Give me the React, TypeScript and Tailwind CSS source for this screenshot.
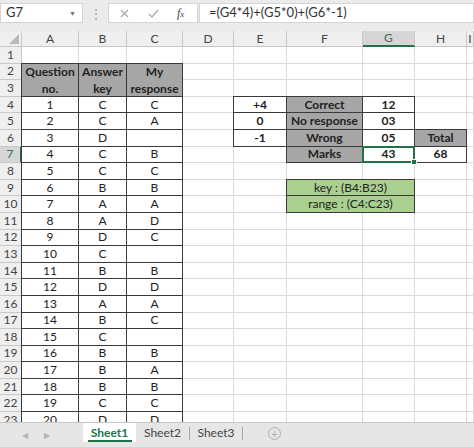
import React from "react";

type Variant = "plain" | "box" | "gray" | "green";

type CellDef = {
  text?: string;
  variant?: Variant;
  bold?: boolean;
  span?: string;
  selected?: boolean;
};

const COLS = ["A", "B", "C", "D", "E", "F", "G", "H", "I"];

const answers: [string, string, string][] = [
  ["1", "C", "C"],
  ["2", "C", "A"],
  ["3", "D", ""],
  ["4", "C", "B"],
  ["5", "C", "C"],
  ["6", "B", "B"],
  ["7", "A", "A"],
  ["8", "A", "D"],
  ["9", "D", "C"],
  ["10", "C", ""],
  ["11", "B", "B"],
  ["12", "D", "D"],
  ["13", "A", "A"],
  ["14", "B", "C"],
  ["15", "C", ""],
  ["16", "B", "B"],
  ["17", "B", "A"],
  ["18", "B", "B"],
  ["19", "C", "C"],
  ["20", "D", "D"],
];

const special: Record<string, CellDef | "skip"> = {
  A2: { text: "Question no.", variant: "gray", bold: true, span: "row-span-2" },
  B2: { text: "Answer key", variant: "gray", bold: true, span: "row-span-2" },
  C2: { text: "My response", variant: "gray", bold: true, span: "row-span-2" },
  A3: "skip",
  B3: "skip",
  C3: "skip",
  E4: { text: "+4", variant: "box", bold: true },
  E5: { text: "0", variant: "box", bold: true },
  E6: { text: "-1", variant: "box", bold: true },
  F4: { text: "Correct", variant: "gray", bold: true },
  F5: { text: "No response", variant: "gray", bold: true },
  F6: { text: "Wrong", variant: "gray", bold: true },
  F7: { text: "Marks", variant: "gray", bold: true },
  G4: { text: "12", variant: "box", bold: true },
  G5: { text: "03", variant: "box", bold: true },
  G6: { text: "05", variant: "box", bold: true },
  G7: { text: "43", variant: "box", bold: true, selected: true },
  H6: { text: "Total", variant: "gray", bold: true },
  H7: { text: "68", variant: "box", bold: true },
  F9: { text: "key : (B4:B23)", variant: "green", span: "col-span-2" },
  G9: "skip",
  F10: { text: "range : (C4:C23)", variant: "green", span: "col-span-2" },
  G10: "skip",
};

answers.forEach((a, i) => {
  const r = i + 4;
  special["A" + r] = { text: a[0], variant: "box" };
  special["B" + r] = { text: a[1], variant: "box" };
  special["C" + r] = { text: a[2], variant: "box" };
});

const variantClass: Record<Variant, string> = {
  plain: "border-r border-b border-[#dadada]",
  box: "-mt-px -ml-px border border-[#3a3a3a] bg-white",
  gray: "-mt-px -ml-px border border-[#3a3a3a] bg-[#a6a6a6]",
  green: "-mt-px -ml-px border border-[#3a3a3a] bg-[#a9d08e]",
};

function Cell({ def }: { def: CellDef }) {
  const v = def.variant ?? "plain";
  return (
    <div
      className={`relative flex items-center justify-center text-center leading-[16px] text-[12px] text-[#222] ${variantClass[v]} ${def.span ?? ""} ${def.bold ? "font-bold" : ""} ${def.selected ? "z-10" : ""}`}
    >
      <span className={def.span === "row-span-2" ? "px-0.5 leading-[17px]" : "whitespace-nowrap"}>{def.text}</span>
      {def.selected && (
        <>
          <div className="pointer-events-none absolute -inset-px border-2 border-[#217346]" />
          <div className="absolute -bottom-[3px] -right-[3px] h-[6px] w-[6px] border border-white bg-[#217346]" />
        </>
      )}
    </div>
  );
}

function FormulaBar() {
  return (
    <div className="flex h-[31px] shrink-0 items-start bg-[#ebebeb] pt-[3px]">
      <div className="flex h-[20px] w-[83px] items-center justify-between border border-[#d4d4d4] bg-white pl-[5px] pr-[6px] text-[13px] text-[#333]">
        <span>G7</span>
        <span className="text-[7px] text-[#777]">▼</span>
      </div>
      <div className="flex w-[25px] items-center justify-center pt-[2px] text-[12px] text-[#a0a0a0]">⋮</div>
      <div className="flex h-[20px] w-[90px] items-center border border-[#d4d4d4] bg-white text-[#a8a8a8]">
        <svg className="ml-[11px]" width="9" height="9" viewBox="0 0 9 9">
          <path d="M1 1L8 8M8 1L1 8" stroke="currentColor" strokeWidth="1.2" />
        </svg>
        <svg className="ml-[19px]" width="11" height="9" viewBox="0 0 11 9">
          <path d="M1 5L4 8L10 1" stroke="currentColor" strokeWidth="1.2" fill="none" />
        </svg>
        <span className="ml-[18px] font-['Liberation_Serif',serif] text-[12px] italic text-[#444]">
          f<span className="text-[9px]">x</span>
        </span>
      </div>
      <div className="ml-px flex h-[20px] flex-1 items-center border border-[#d4d4d4] bg-white pl-[9px] text-[13px] text-[#333]">
        =(G4*4)+(G5*0)+(G6*-1)
      </div>
    </div>
  );
}

function Sheet() {
  const rows = Array.from({ length: 23 }, (_, i) => i + 1);
  return (
    <div className="flex-1 overflow-hidden bg-white">
      <div className="grid grid-cols-[22px_57px_48px_56px_51px_53px_76px_52px_52px_1fr] grid-rows-[16px_repeat(23,16.6px)]">
        <div className="relative border-r border-b border-[#c8c8c8] bg-[#efefef]">
          <svg className="absolute bottom-[2px] right-[2px]" width="10" height="10" viewBox="0 0 10 10">
            <path d="M10 0L10 10L0 10Z" fill="#b9b9b9" />
          </svg>
        </div>
        {COLS.map((c) =>
          c === "G" ? (
            <div
              key={c}
              className="flex items-center justify-center border-r border-b-2 border-r-[#c8c8c8] border-b-[#217346] bg-[#d6d6d6] text-[12px] text-[#3b6e50]"
            >
              {c}
            </div>
          ) : (
            <div
              key={c}
              className="flex items-center justify-center border-r border-b border-[#c8c8c8] bg-[#efefef] text-[12px] text-[#444]"
            >
              {c}
            </div>
          )
        )}
        {rows.map((r) => (
          <React.Fragment key={r}>
            {r === 7 ? (
              <div className="flex items-center justify-center border-r-2 border-b border-r-[#217346] border-b-[#c8c8c8] bg-[#d6d6d6] text-[12px] text-[#3b6e50]">
                {r}
              </div>
            ) : (
              <div className="flex items-center justify-center border-r border-b border-[#c8c8c8] bg-[#efefef] text-[12px] text-[#444]">
                {r}
              </div>
            )}
            {COLS.map((c) => {
              const d = special[c + r];
              if (d === "skip") return null;
              return <Cell key={c + r} def={d ?? {}} />;
            })}
          </React.Fragment>
        ))}
      </div>
    </div>
  );
}

function Tabs() {
  return (
    <div className="flex h-[25px] shrink-0 items-start border-t border-[#c6c6c6] bg-[#e6e6e6] text-[12px]">
      <div className="flex w-[83px] items-center pt-[6px] text-[8px] text-[#b5b5b5]">
        <span className="ml-[22px]">◀</span>
        <span className="ml-[16px]">▶</span>
      </div>
      <div className="flex h-[19px] w-[53px] shrink-0 flex-col items-center justify-between bg-white">
        <span className="pt-[3px] font-bold leading-[13px] text-[#217346]">Sheet1</span>
        <div className="h-[2px] w-[44px] bg-[#217346]" />
      </div>
      <div className="flex h-[19px] w-[53px] shrink-0 items-center justify-center leading-[13px] text-[#444]">Sheet2</div>
      <div className="mt-[4px] h-[13px] w-px bg-[#a8a8a8]" />
      <div className="flex h-[19px] w-[52px] shrink-0 items-center justify-center leading-[13px] text-[#444]">Sheet3</div>
      <div className="mt-[4px] h-[13px] w-px bg-[#a8a8a8]" />
      <div className="ml-[25px] mt-[4px] flex h-[13px] w-[13px] items-center justify-center rounded-full border border-[#b0b0b0] text-[11px] leading-none text-[#b0b0b0]">
        +
      </div>
    </div>
  );
}

export default function App() {
  return (
    <div className="flex h-[447px] w-[474px] flex-col overflow-hidden bg-white font-['Lato',sans-serif]">
      <FormulaBar />
      <Sheet />
      <Tabs />
    </div>
  );
}
